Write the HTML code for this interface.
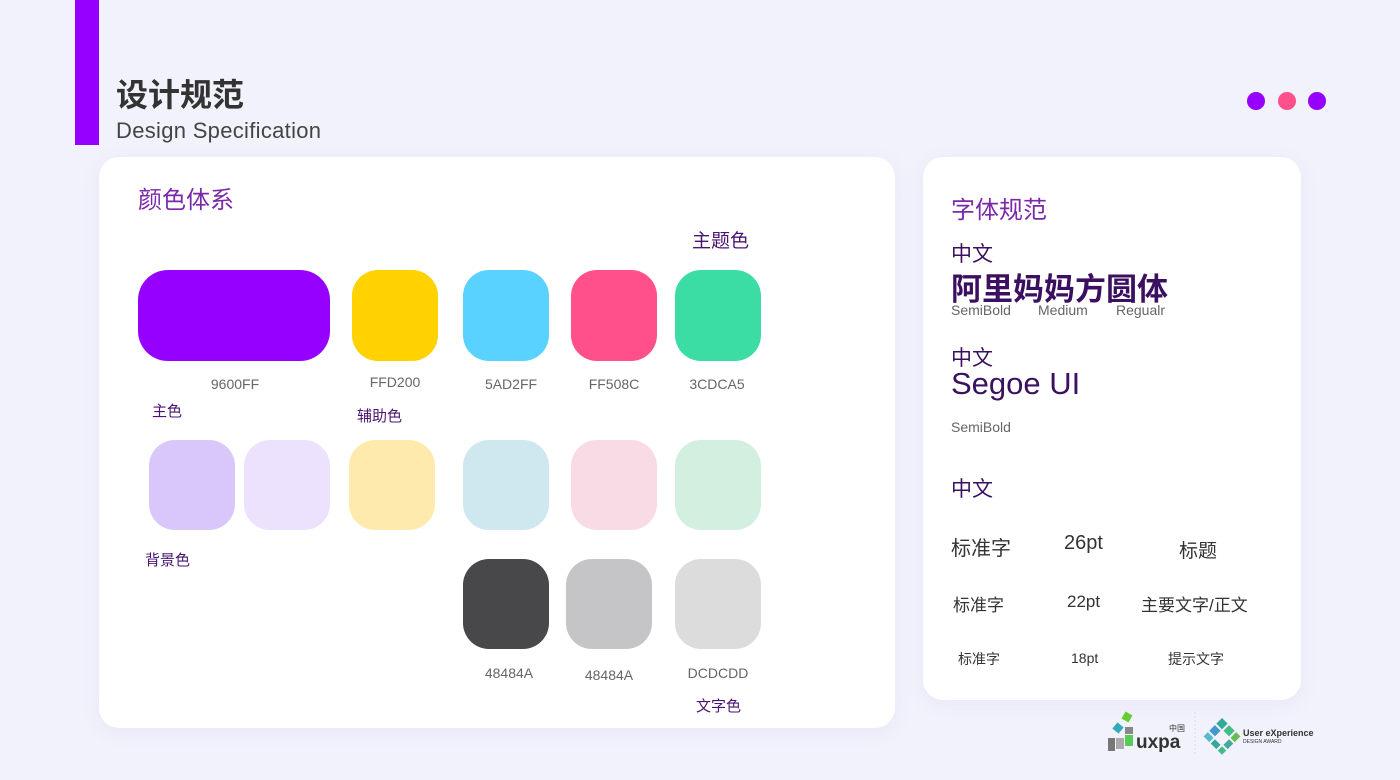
<!DOCTYPE html>
<html><head><meta charset="utf-8"><style>
*{margin:0;padding:0;box-sizing:border-box}
body{width:1400px;height:780px;background:#f2f2fc;position:relative;overflow:hidden;font-family:"Liberation Sans","Noto Sans CJK SC",sans-serif}
.a{position:absolute}
.card{position:absolute;background:#fff;border-radius:20px;box-shadow:0 4px 20px rgba(120,110,200,.08)}
.sw{position:absolute;border-radius:26px}
.lbl{position:absolute;font-size:14px;color:#666;text-align:center;width:100px}
.cn{position:absolute;color:#4a1570;font-size:15px}
.t{position:absolute;color:#333;white-space:nowrap}
</style></head><body>
<div class="a" style="left:75px;top:0;width:24px;height:145px;background:#9600ff"></div>
<div class="a" style="left:116px;top:70px;font-size:32px;font-weight:bold;color:#333">设计规范</div>
<div class="a" style="left:116px;top:118px;font-size:22px;color:#444;letter-spacing:0.3px">Design Specification</div>
<div class="a" style="left:1247px;top:92px;width:18px;height:18px;border-radius:50%;background:#9600ff"></div>
<div class="a" style="left:1278px;top:92px;width:18px;height:18px;border-radius:50%;background:#ff508c"></div>
<div class="a" style="left:1308px;top:92px;width:18px;height:18px;border-radius:50%;background:#9600ff"></div>

<div class="card" style="left:99px;top:157px;width:796px;height:571px"></div>
<div class="a" style="left:138px;top:180px;font-size:24px;color:#7a2aa8">颜色体系</div>
<div class="cn" style="left:692px;top:226px;font-size:19px">主题色</div>
<div class="sw" style="left:138px;top:270px;width:192px;height:91px;background:#9600ff;border-radius:30px"></div>
<div class="sw" style="left:352px;top:270px;width:86px;height:91px;background:#ffd200"></div>
<div class="sw" style="left:463px;top:270px;width:86px;height:91px;background:#5ad2ff"></div>
<div class="sw" style="left:571px;top:270px;width:86px;height:91px;background:#ff508c"></div>
<div class="sw" style="left:675px;top:270px;width:86px;height:91px;background:#3cdca5"></div>
<div class="lbl" style="left:185px;top:376px">9600FF</div>
<div class="lbl" style="left:345px;top:374px">FFD200</div>
<div class="lbl" style="left:461px;top:376px">5AD2FF</div>
<div class="lbl" style="left:564px;top:376px">FF508C</div>
<div class="lbl" style="left:667px;top:376px">3CDCA5</div>
<div class="cn" style="left:152px;top:400px">主色</div>
<div class="cn" style="left:357px;top:405px">辅助色</div>
<div class="sw" style="left:149px;top:440px;width:86px;height:90px;background:#d9c6fb"></div>
<div class="sw" style="left:244px;top:440px;width:86px;height:90px;background:#ece2fd"></div>
<div class="sw" style="left:349px;top:440px;width:86px;height:90px;background:#ffeaad"></div>
<div class="sw" style="left:463px;top:440px;width:86px;height:90px;background:#cfe7ef"></div>
<div class="sw" style="left:571px;top:440px;width:86px;height:90px;background:#f8dbe4"></div>
<div class="sw" style="left:675px;top:440px;width:86px;height:90px;background:#d2efdf"></div>
<div class="cn" style="left:145px;top:549px">背景色</div>
<div class="sw" style="left:463px;top:559px;width:86px;height:90px;background:#48484a"></div>
<div class="sw" style="left:566px;top:559px;width:86px;height:90px;background:#c5c5c7"></div>
<div class="sw" style="left:675px;top:559px;width:86px;height:90px;background:#dcdcdd"></div>
<div class="lbl" style="left:459px;top:665px">48484A</div>
<div class="lbl" style="left:559px;top:667px">48484A</div>
<div class="lbl" style="left:668px;top:665px">DCDCDD</div>
<div class="cn" style="left:696px;top:695px">文字色</div>

<div class="card" style="left:923px;top:157px;width:378px;height:543px"></div>
<div class="a" style="left:951px;top:190px;font-size:24px;color:#7a2aa8">字体规范</div>
<div class="a" style="left:951px;top:238px;font-size:21px;color:#3c1060">中文</div>
<div class="a" style="left:951px;top:264px;font-size:31px;font-weight:bold;color:#3c1060">阿里妈妈方圆体</div>
<div class="a" style="left:951px;top:302px;font-size:14px;color:#666">SemiBold</div>
<div class="a" style="left:1038px;top:302px;font-size:14px;color:#666">Medium</div>
<div class="a" style="left:1116px;top:302px;font-size:14px;color:#666">Regualr</div>
<div class="a" style="left:951px;top:342px;font-size:21px;color:#3c1060">中文</div>
<div class="a" style="left:951px;top:366px;font-size:31px;color:#3c1060">Segoe UI</div>
<div class="a" style="left:951px;top:419px;font-size:14px;color:#666">SemiBold</div>
<div class="a" style="left:951px;top:473px;font-size:21px;color:#3c1060">中文</div>
<div class="t" style="left:951px;top:532px;font-size:20px">标准字</div>
<div class="t" style="left:1064px;top:532px;font-size:20px">26pt</div>
<div class="t" style="left:1179px;top:536px;font-size:19px">标题</div>
<div class="t" style="left:953px;top:591px;font-size:17px">标准字</div>
<div class="t" style="left:1067px;top:592px;font-size:17px">22pt</div>
<div class="t" style="left:1141px;top:591px;font-size:17px">主要文字/正文</div>
<div class="t" style="left:958px;top:649px;font-size:14px">标准字</div>
<div class="t" style="left:1071px;top:650px;font-size:14px">18pt</div>
<div class="t" style="left:1168px;top:649px;font-size:14px">提示文字</div>

<svg class="a" style="left:1105px;top:710px" width="215" height="48">
<rect x="3" y="28" width="7" height="13" fill="#777"/><rect x="11" y="28" width="8" height="11" fill="#aaa"/><rect x="20" y="25" width="8" height="11" fill="#5c5"/><rect x="20" y="17" width="8" height="7" fill="#888"/>
<rect x="9" y="14" width="8" height="8" fill="#3ab" transform="rotate(40 13 18)"/><rect x="18" y="3" width="8" height="8" fill="#6c3" transform="rotate(30 22 7)"/>
<text x="31" y="38" font-size="19" font-weight="bold" fill="#333" font-family="Liberation Sans">uxpa</text>
<text x="64" y="21" font-size="8" fill="#333" font-family="Noto Sans CJK SC">中国</text>
<line x1="90" y1="2" x2="90" y2="46" stroke="#ddd" stroke-dasharray="2 2"/>
<g transform="translate(117 25) rotate(45)"><rect x="-12" y="-12" width="8" height="8" fill="#3a9"/><rect x="-2" y="-12" width="8" height="8" fill="#4b8"/><rect x="8" y="-12" width="6" height="8" fill="#6b5"/><rect x="-12" y="-2" width="8" height="8" fill="#49c"/><rect x="8" y="-2" width="6" height="8" fill="#4a9"/><rect x="-12" y="8" width="8" height="6" fill="#5bc"/><rect x="-2" y="8" width="8" height="6" fill="#3a9"/><rect x="8" y="8" width="6" height="6" fill="#4b8"/></g>
<text x="138" y="26" font-size="9" font-weight="bold" fill="#333" font-family="Liberation Sans">User eXperience</text>
<text x="138" y="33" font-size="5" fill="#333" font-family="Liberation Sans">DESIGN  AWARD</text>
</svg>
</body></html>
